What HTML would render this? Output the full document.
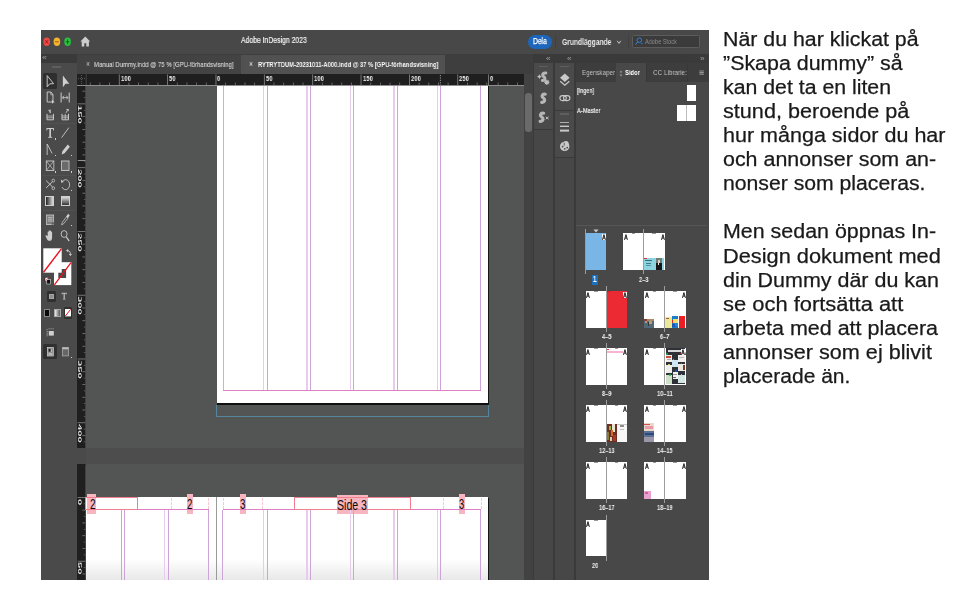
<!DOCTYPE html>
<html><head><meta charset="utf-8"><title>InDesign dummy</title>
<style>
html,body{margin:0;padding:0;background:#fff}
body{width:969px;height:604px;position:relative;overflow:hidden;font-family:"Liberation Sans", sans-serif}
body>div,body>svg{position:absolute;display:block}
.t{white-space:pre;transform-origin:0 50%;will-change:transform}
.b{font-size:20px;line-height:24px;color:#1a1a1a;-webkit-text-stroke:0.25px #1a1a1a}
</style></head><body>
<div style="left:41.00px;top:30.10px;width:667.70px;height:549.50px;background:#484848;"></div>
<div style="left:41.00px;top:30.10px;width:667.70px;height:24.20px;background:#484848;"></div>
<svg style="left:41.00px;top:34.00px;" width="40.00" height="16" viewBox="0 0 40 16"><ellipse cx="5.7" cy="7.8" rx="3.3" ry="4.2" fill="#ed4a45"/><path d="M4.4 6.2l2.6 3.2M7 6.2l-2.6 3.2" stroke="#8c1a14" stroke-width="0.9"/><ellipse cx="15.9" cy="7.8" rx="3.3" ry="4.2" fill="#f6b32e"/><path d="M14 7.8h3.8" stroke="#9a6206" stroke-width="1"/><ellipse cx="26.6" cy="7.8" rx="3.3" ry="4.2" fill="#2ac33f"/><path d="M24.7 7.8h3.8M26.6 5.4v4.8" stroke="#0b6a18" stroke-width="1"/></svg>
<svg style="left:79.50px;top:36.00px;" width="11.00" height="11" viewBox="0 0 11 11"><path d="M5.3 0.6L0.4 5.6h1.3v4.8h2.6V7.2h2v3.2h2.6V5.6h1.3z" fill="#cdcdcd"/></svg>
<div style="left:527.60px;top:35.00px;width:24.40px;height:13.60px;background:#1e66bb;border-radius:7px"></div>
<div style="left:554.60px;top:35.00px;width:0.80px;height:14.00px;background:#404040;"></div>
<svg style="left:615.80px;top:40.20px;" width="6.00" height="5" viewBox="0 0 6 5"><path d="M1.200 0.800L3 3.400L4.800 0.800" fill="none" stroke="#d0d0d0" stroke-width="0.900"/></svg>
<div style="left:628.00px;top:35.30px;width:0.80px;height:12.90px;background:#404040;"></div>
<div style="left:632.20px;top:34.70px;width:67.40px;height:13.70px;background:#3b3b3b;box-sizing:border-box;border:1px solid #5c5c5c;border-radius:1.5px"></div>
<svg style="left:634.50px;top:37.00px;" width="9.00" height="9" viewBox="0 0 9 9"><circle cx="4.3" cy="3.2" r="2.3" fill="none" stroke="#2f86e8" stroke-width="0.9"/><path d="M2.7 4.9L0.6 7.6" stroke="#2f86e8" stroke-width="1"/><path d="M5.8 6.3h2.2l-1.1 1.3z" fill="#2f86e8"/></svg>
<div style="left:41.00px;top:54.30px;width:667.70px;height:8.30px;background:#3a3a3a;"></div>
<div style="left:76.80px;top:54.30px;width:456.20px;height:19.70px;background:#3e3e3e;"></div>
<div style="left:76.80px;top:55.20px;width:163.80px;height:18.80px;background:#434343;"></div>
<div style="left:241.20px;top:55.00px;width:203.80px;height:19.00px;background:#515151;"></div>
<div style="left:41.00px;top:62.60px;width:35.60px;height:517.00px;background:#4a4a4a;"></div>
<div style="left:52.00px;top:66.00px;width:9.00px;height:1.60px;background:#5e5e5e;"></div>
<div style="left:42.60px;top:73.20px;width:14.30px;height:15.50px;background:#2f2f2f;border-radius:1.5px"></div>
<div style="left:43.00px;top:122.80px;width:32.00px;height:0.70px;background:#525252;"></div>
<div style="left:43.00px;top:175.40px;width:32.00px;height:0.70px;background:#525252;"></div>
<div style="left:43.00px;top:209.60px;width:32.00px;height:0.70px;background:#525252;"></div>
<div style="left:76.80px;top:74.00px;width:447.10px;height:11.40px;background:#1f1f1f;"></div>
<div style="left:76.80px;top:85.40px;width:8.80px;height:494.20px;background:#1f1f1f;"></div>
<div style="left:76.80px;top:84.90px;width:447.10px;height:0.80px;background:#8e8e8e;"></div>
<div style="left:85.60px;top:85.60px;width:438.30px;height:494.00px;background:#535554;"></div>
<svg style="left:76.80px;top:74.00px;" width="447.10" height="11.4" viewBox="0 0 447.1 11.4"><rect x="12.66" y="8.5" width="0.8" height="2.6" fill="#747474"/><rect x="22.34" y="8.5" width="0.8" height="2.6" fill="#747474"/><rect x="32.02" y="8.5" width="0.8" height="2.6" fill="#747474"/><rect x="41.70" y="0.4" width="0.8" height="11" fill="#8a8a8a"/><rect x="51.38" y="8.5" width="0.8" height="2.6" fill="#747474"/><rect x="61.06" y="8.5" width="0.8" height="2.6" fill="#747474"/><rect x="70.74" y="8.5" width="0.8" height="2.6" fill="#747474"/><rect x="80.42" y="8.5" width="0.8" height="2.6" fill="#747474"/><rect x="90.10" y="0.4" width="0.8" height="11" fill="#8a8a8a"/><rect x="99.78" y="8.5" width="0.8" height="2.6" fill="#747474"/><rect x="109.46" y="8.5" width="0.8" height="2.6" fill="#747474"/><rect x="119.14" y="8.5" width="0.8" height="2.6" fill="#747474"/><rect x="128.82" y="8.5" width="0.8" height="2.6" fill="#747474"/><rect x="138.50" y="0.4" width="0.8" height="11" fill="#8a8a8a"/><rect x="148.18" y="8.5" width="0.8" height="2.6" fill="#747474"/><rect x="157.86" y="8.5" width="0.8" height="2.6" fill="#747474"/><rect x="167.54" y="8.5" width="0.8" height="2.6" fill="#747474"/><rect x="177.22" y="8.5" width="0.8" height="2.6" fill="#747474"/><rect x="186.90" y="0.4" width="0.8" height="11" fill="#8a8a8a"/><rect x="196.58" y="8.5" width="0.8" height="2.6" fill="#747474"/><rect x="206.26" y="8.5" width="0.8" height="2.6" fill="#747474"/><rect x="215.94" y="8.5" width="0.8" height="2.6" fill="#747474"/><rect x="225.62" y="8.5" width="0.8" height="2.6" fill="#747474"/><rect x="235.30" y="0.4" width="0.8" height="11" fill="#8a8a8a"/><rect x="244.98" y="8.5" width="0.8" height="2.6" fill="#747474"/><rect x="254.66" y="8.5" width="0.8" height="2.6" fill="#747474"/><rect x="264.34" y="8.5" width="0.8" height="2.6" fill="#747474"/><rect x="274.02" y="8.5" width="0.8" height="2.6" fill="#747474"/><rect x="283.70" y="0.4" width="0.8" height="11" fill="#8a8a8a"/><rect x="293.38" y="8.5" width="0.8" height="2.6" fill="#747474"/><rect x="303.06" y="8.5" width="0.8" height="2.6" fill="#747474"/><rect x="312.74" y="8.5" width="0.8" height="2.6" fill="#747474"/><rect x="322.42" y="8.5" width="0.8" height="2.6" fill="#747474"/><rect x="332.10" y="0.4" width="0.8" height="11" fill="#8a8a8a"/><rect x="341.78" y="8.5" width="0.8" height="2.6" fill="#747474"/><rect x="351.46" y="8.5" width="0.8" height="2.6" fill="#747474"/><rect x="361.14" y="8.5" width="0.8" height="2.6" fill="#747474"/><rect x="370.82" y="8.5" width="0.8" height="2.6" fill="#747474"/><rect x="380.50" y="0.4" width="0.8" height="11" fill="#8a8a8a"/><rect x="390.18" y="8.5" width="0.8" height="2.6" fill="#747474"/><rect x="399.86" y="8.5" width="0.8" height="2.6" fill="#747474"/><rect x="409.54" y="8.5" width="0.8" height="2.6" fill="#747474"/><rect x="411.20" y="0.4" width="0.8" height="11" fill="#8a8a8a"/><rect x="420.88" y="8.5" width="0.8" height="2.6" fill="#747474"/><rect x="430.56" y="8.5" width="0.8" height="2.6" fill="#747474"/><rect x="440.24" y="8.5" width="0.8" height="2.6" fill="#747474"/><path d="M4.4 1v9M0.8 4.6h7.4" stroke="#777" stroke-width="0.7" stroke-dasharray="1 1"/><path d="M363.5 1v10" stroke="#bbb" stroke-width="0.8" stroke-dasharray="1.2 1.2"/><rect x="8.6" y="0" width="0.7" height="11.4" fill="#555"/></svg>
<svg style="left:76.80px;top:85.60px;" width="8.80" height="494.0" viewBox="0 0 8.8 494.0"><rect x="5.4" y="4.64" width="3.4" height="0.8" fill="#7c7c7c"/><rect x="6.8" y="11.02" width="2" height="0.8" fill="#666"/><rect x="0.6" y="17.40" width="8.2" height="0.8" fill="#8a8a8a"/><rect x="6.8" y="23.78" width="2" height="0.8" fill="#666"/><rect x="5.4" y="30.16" width="3.4" height="0.8" fill="#7c7c7c"/><rect x="6.8" y="36.54" width="2" height="0.8" fill="#666"/><rect x="5.4" y="42.92" width="3.4" height="0.8" fill="#7c7c7c"/><rect x="6.8" y="49.30" width="2" height="0.8" fill="#666"/><rect x="5.4" y="55.68" width="3.4" height="0.8" fill="#7c7c7c"/><rect x="6.8" y="62.06" width="2" height="0.8" fill="#666"/><rect x="5.4" y="68.44" width="3.4" height="0.8" fill="#7c7c7c"/><rect x="6.8" y="74.82" width="2" height="0.8" fill="#666"/><rect x="0.6" y="81.20" width="8.2" height="0.8" fill="#8a8a8a"/><rect x="6.8" y="87.58" width="2" height="0.8" fill="#666"/><rect x="5.4" y="93.96" width="3.4" height="0.8" fill="#7c7c7c"/><rect x="6.8" y="100.34" width="2" height="0.8" fill="#666"/><rect x="5.4" y="106.72" width="3.4" height="0.8" fill="#7c7c7c"/><rect x="6.8" y="113.10" width="2" height="0.8" fill="#666"/><rect x="5.4" y="119.48" width="3.4" height="0.8" fill="#7c7c7c"/><rect x="6.8" y="125.86" width="2" height="0.8" fill="#666"/><rect x="5.4" y="132.24" width="3.4" height="0.8" fill="#7c7c7c"/><rect x="6.8" y="138.62" width="2" height="0.8" fill="#666"/><rect x="0.6" y="145.00" width="8.2" height="0.8" fill="#8a8a8a"/><rect x="6.8" y="151.38" width="2" height="0.8" fill="#666"/><rect x="5.4" y="157.76" width="3.4" height="0.8" fill="#7c7c7c"/><rect x="6.8" y="164.14" width="2" height="0.8" fill="#666"/><rect x="5.4" y="170.52" width="3.4" height="0.8" fill="#7c7c7c"/><rect x="6.8" y="176.90" width="2" height="0.8" fill="#666"/><rect x="5.4" y="183.28" width="3.4" height="0.8" fill="#7c7c7c"/><rect x="6.8" y="189.66" width="2" height="0.8" fill="#666"/><rect x="5.4" y="196.04" width="3.4" height="0.8" fill="#7c7c7c"/><rect x="6.8" y="202.42" width="2" height="0.8" fill="#666"/><rect x="0.6" y="208.80" width="8.2" height="0.8" fill="#8a8a8a"/><rect x="6.8" y="215.18" width="2" height="0.8" fill="#666"/><rect x="5.4" y="221.56" width="3.4" height="0.8" fill="#7c7c7c"/><rect x="6.8" y="227.94" width="2" height="0.8" fill="#666"/><rect x="5.4" y="234.32" width="3.4" height="0.8" fill="#7c7c7c"/><rect x="6.8" y="240.70" width="2" height="0.8" fill="#666"/><rect x="5.4" y="247.08" width="3.4" height="0.8" fill="#7c7c7c"/><rect x="6.8" y="253.46" width="2" height="0.8" fill="#666"/><rect x="5.4" y="259.84" width="3.4" height="0.8" fill="#7c7c7c"/><rect x="6.8" y="266.22" width="2" height="0.8" fill="#666"/><rect x="0.6" y="272.60" width="8.2" height="0.8" fill="#8a8a8a"/><rect x="6.8" y="278.98" width="2" height="0.8" fill="#666"/><rect x="5.4" y="285.36" width="3.4" height="0.8" fill="#7c7c7c"/><rect x="6.8" y="291.74" width="2" height="0.8" fill="#666"/><rect x="5.4" y="298.12" width="3.4" height="0.8" fill="#7c7c7c"/><rect x="6.8" y="304.50" width="2" height="0.8" fill="#666"/><rect x="5.4" y="310.88" width="3.4" height="0.8" fill="#7c7c7c"/><rect x="6.8" y="317.26" width="2" height="0.8" fill="#666"/><rect x="5.4" y="323.64" width="3.4" height="0.8" fill="#7c7c7c"/><rect x="6.8" y="330.02" width="2" height="0.8" fill="#666"/><rect x="0.6" y="336.40" width="8.2" height="0.8" fill="#8a8a8a"/><rect x="6.8" y="342.78" width="2" height="0.8" fill="#666"/><rect x="5.4" y="349.16" width="3.4" height="0.8" fill="#7c7c7c"/><rect x="6.8" y="355.54" width="2" height="0.8" fill="#666"/><rect x="0.6" y="411.10" width="8.2" height="0.8" fill="#8a8a8a"/><rect x="6.8" y="417.48" width="2" height="0.8" fill="#666"/><rect x="5.4" y="423.86" width="3.4" height="0.8" fill="#7c7c7c"/><rect x="6.8" y="430.24" width="2" height="0.8" fill="#666"/><rect x="5.4" y="436.62" width="3.4" height="0.8" fill="#7c7c7c"/><rect x="6.8" y="443.00" width="2" height="0.8" fill="#666"/><rect x="5.4" y="449.38" width="3.4" height="0.8" fill="#7c7c7c"/><rect x="6.8" y="455.76" width="2" height="0.8" fill="#666"/><rect x="5.4" y="462.14" width="3.4" height="0.8" fill="#7c7c7c"/><rect x="6.8" y="468.52" width="2" height="0.8" fill="#666"/><rect x="0.6" y="474.90" width="8.2" height="0.8" fill="#8a8a8a"/><rect x="6.8" y="481.28" width="2" height="0.8" fill="#666"/><rect x="5.4" y="487.66" width="3.4" height="0.8" fill="#7c7c7c"/><rect x="8" y="0" width="0.8" height="363.3" fill="#4c4c4c"/><rect x="8" y="378.6" width="0.8" height="115.4" fill="#4c4c4c"/><rect x="0.8" y="74.1" width="7.6" height="0.8" fill="#b5b5b5"/></svg>
<div style="left:82.25px;top:104.90px;font-size:11.3px;line-height:11.3px;font-weight:700;color:#dedede;white-space:pre;transform-origin:0 0;transform:scaleX(0.433) rotate(90deg);will-change:transform">150</div>
<div style="left:82.25px;top:168.70px;font-size:11.3px;line-height:11.3px;font-weight:700;color:#dedede;white-space:pre;transform-origin:0 0;transform:scaleX(0.433) rotate(90deg);will-change:transform">200</div>
<div style="left:82.25px;top:232.50px;font-size:11.3px;line-height:11.3px;font-weight:700;color:#dedede;white-space:pre;transform-origin:0 0;transform:scaleX(0.433) rotate(90deg);will-change:transform">250</div>
<div style="left:82.25px;top:296.30px;font-size:11.3px;line-height:11.3px;font-weight:700;color:#dedede;white-space:pre;transform-origin:0 0;transform:scaleX(0.433) rotate(90deg);will-change:transform">300</div>
<div style="left:82.25px;top:360.10px;font-size:11.3px;line-height:11.3px;font-weight:700;color:#dedede;white-space:pre;transform-origin:0 0;transform:scaleX(0.433) rotate(90deg);will-change:transform">350</div>
<div style="left:82.25px;top:423.90px;font-size:11.3px;line-height:11.3px;font-weight:700;color:#dedede;white-space:pre;transform-origin:0 0;transform:scaleX(0.433) rotate(90deg);will-change:transform">400</div>
<div style="left:82.25px;top:498.60px;font-size:11.3px;line-height:11.3px;font-weight:700;color:#dedede;white-space:pre;transform-origin:0 0;transform:scaleX(0.433) rotate(90deg);will-change:transform">0</div>
<div style="left:82.25px;top:562.40px;font-size:11.3px;line-height:11.3px;font-weight:700;color:#dedede;white-space:pre;transform-origin:0 0;transform:scaleX(0.433) rotate(90deg);will-change:transform">50</div>
<div style="left:216.60px;top:85.60px;width:271.60px;height:317.20px;background:#fff;"></div>
<div style="left:216.60px;top:402.80px;width:272.60px;height:1.90px;background:#101010;"></div>
<div style="left:488.20px;top:85.60px;width:1.00px;height:319.10px;background:#151515;"></div>
<div style="left:216.3px;top:404.9px;width:272.5px;height:11.8px;box-sizing:border-box;border:0.8px solid #56869b;border-top:none"></div>
<div style="left:222.95px;top:85.60px;width:0.90px;height:304.50px;background:#e2a4d0;"></div>
<div style="left:263.35px;top:85.60px;width:1.10px;height:304.50px;background:#e9cbed;"></div>
<div style="left:266.85px;top:85.60px;width:0.90px;height:304.50px;background:#cba5da;"></div>
<div style="left:306.45px;top:85.60px;width:1.10px;height:304.50px;background:#e9cbed;"></div>
<div style="left:309.95px;top:85.60px;width:0.90px;height:304.50px;background:#cba5da;"></div>
<div style="left:350.05px;top:85.60px;width:1.10px;height:304.50px;background:#e9cbed;"></div>
<div style="left:353.35px;top:85.60px;width:0.90px;height:304.50px;background:#cba5da;"></div>
<div style="left:393.45px;top:85.60px;width:1.10px;height:304.50px;background:#e9cbed;"></div>
<div style="left:396.85px;top:85.60px;width:0.90px;height:304.50px;background:#cba5da;"></div>
<div style="left:436.85px;top:85.60px;width:1.10px;height:304.50px;background:#e9cbed;"></div>
<div style="left:440.35px;top:85.60px;width:0.90px;height:304.50px;background:#cba5da;"></div>
<div style="left:479.95px;top:85.60px;width:0.90px;height:304.50px;background:#cba5da;"></div>
<div style="left:223.00px;top:389.60px;width:257.80px;height:1.00px;background:#dd7fc0;"></div>
<div style="left:76.80px;top:448.30px;width:447.10px;height:16.00px;background:#4d4d4d;"></div>
<div style="left:76.80px;top:448.30px;width:8.80px;height:16.00px;background:#4a4a4a;"></div>
<div style="left:85.60px;top:496.80px;width:402.60px;height:82.80px;background:#fff;"></div>
<div style="left:85.6px;top:558.6px;width:402.7px;height:21px;background:linear-gradient(#fff,#e8e8e8)"></div>
<div style="left:488.20px;top:497.60px;width:1.00px;height:82.00px;background:#151515;"></div>
<div style="left:86.90px;top:494.40px;width:8.70px;height:19.40px;background:#f6b5bf;"></div>
<div style="left:186.80px;top:494.40px;width:6.50px;height:19.40px;background:#f6b5bf;"></div>
<div style="left:239.70px;top:494.40px;width:6.50px;height:19.40px;background:#f6b5bf;"></div>
<div style="left:337.00px;top:494.80px;width:30.60px;height:18.80px;background:#f6b5bf;"></div>
<div style="left:459.00px;top:494.40px;width:5.50px;height:19.40px;background:#f6b5bf;"></div>
<div style="left:215.85px;top:497.10px;width:0.90px;height:82.50px;background:#9a9a9a;"></div>
<div style="left:121.25px;top:509.50px;width:0.90px;height:70.10px;background:#cba5da;"></div>
<div style="left:124.45px;top:509.50px;width:0.90px;height:70.10px;background:#cba5da;"></div>
<div style="left:164.25px;top:509.50px;width:1.10px;height:70.10px;background:#e9cbed;"></div>
<div style="left:167.75px;top:509.50px;width:0.90px;height:70.10px;background:#cba5da;"></div>
<div style="left:208.25px;top:509.50px;width:0.90px;height:70.10px;background:#cba5da;"></div>
<div style="left:85.60px;top:509.00px;width:123.30px;height:1.00px;background:#dd7fc0;"></div>
<div style="left:222.45px;top:509.50px;width:0.90px;height:70.10px;background:#cba5da;"></div>
<div style="left:263.35px;top:509.50px;width:1.10px;height:70.10px;background:#e9cbed;"></div>
<div style="left:266.85px;top:509.50px;width:0.90px;height:70.10px;background:#cba5da;"></div>
<div style="left:306.45px;top:509.50px;width:1.10px;height:70.10px;background:#e9cbed;"></div>
<div style="left:309.95px;top:509.50px;width:0.90px;height:70.10px;background:#cba5da;"></div>
<div style="left:350.05px;top:509.50px;width:1.10px;height:70.10px;background:#e9cbed;"></div>
<div style="left:353.35px;top:509.50px;width:0.90px;height:70.10px;background:#cba5da;"></div>
<div style="left:393.45px;top:509.50px;width:1.10px;height:70.10px;background:#e9cbed;"></div>
<div style="left:396.85px;top:509.50px;width:0.90px;height:70.10px;background:#cba5da;"></div>
<div style="left:436.85px;top:509.50px;width:1.10px;height:70.10px;background:#e9cbed;"></div>
<div style="left:440.35px;top:509.50px;width:0.90px;height:70.10px;background:#cba5da;"></div>
<div style="left:480.25px;top:509.50px;width:0.90px;height:70.10px;background:#cba5da;"></div>
<div style="left:222.60px;top:509.00px;width:258.40px;height:1.00px;background:#dd7fc0;"></div>
<div style="left:171.00px;top:497.50px;width:0;height:11.80px;border-left:0.8px dashed #f8c9d3"></div>
<div style="left:207.90px;top:497.50px;width:0;height:11.80px;border-left:0.8px dashed #f8c9d3"></div>
<div style="left:223.20px;top:497.50px;width:0;height:11.80px;border-left:0.8px dashed #f8c9d3"></div>
<div style="left:262.00px;top:497.50px;width:0;height:11.80px;border-left:0.8px dashed #f8c9d3"></div>
<div style="left:443.30px;top:497.50px;width:0;height:11.80px;border-left:0.8px dashed #f8c9d3"></div>
<div style="left:480.50px;top:497.50px;width:0;height:11.80px;border-left:0.8px dashed #f8c9d3"></div>
<div style="left:85.20px;top:497.30px;width:52.80px;height:12.90px;box-sizing:border-box;border:1px solid #f27f90"></div>
<div style="left:294.30px;top:497.40px;width:116.40px;height:12.90px;box-sizing:border-box;border:1px solid #f27f90"></div>
<div style="left:523.90px;top:74.00px;width:9.30px;height:505.60px;background:#424242;"></div>
<div style="left:525.30px;top:92.90px;width:6.30px;height:38.90px;background:#6a6a6a;border-radius:3.2px"></div>
<div style="left:533.20px;top:62.60px;width:175.50px;height:517.00px;background:#3a3a3a;"></div>
<div style="left:533.70px;top:62.60px;width:19.20px;height:66.40px;background:#4a4a4a;"></div>
<div style="left:533.70px;top:129.80px;width:19.20px;height:449.80px;background:#474747;"></div>
<div style="left:554.80px;top:62.60px;width:18.80px;height:47.40px;background:#4a4a4a;"></div>
<div style="left:554.80px;top:110.80px;width:18.80px;height:46.20px;background:#4a4a4a;"></div>
<div style="left:554.80px;top:157.80px;width:18.80px;height:421.80px;background:#474747;"></div>
<div style="left:575.60px;top:62.60px;width:133.10px;height:517.00px;background:#484848;"></div>
<div style="left:539.00px;top:65.80px;width:8.60px;height:1.40px;background:#5e5e5e;"></div>
<div style="left:560.00px;top:65.80px;width:8.60px;height:1.40px;background:#5e5e5e;"></div>
<div style="left:560.00px;top:113.40px;width:8.60px;height:1.40px;background:#5e5e5e;"></div>
<div style="left:575.60px;top:62.60px;width:133.10px;height:19.30px;background:#3d3d3d;"></div>
<div style="left:616.10px;top:62.60px;width:29.80px;height:19.30px;background:#484848;"></div>
<div style="left:645.90px;top:62.60px;width:0.70px;height:19.30px;background:#383838;"></div>
<div style="left:686.60px;top:62.60px;width:0.60px;height:19.30px;background:#383838;"></div>
<svg style="left:618.80px;top:69.60px;" width="4.00" height="7" viewBox="0 0 4 7"><path d="M2 0.6L3.4 2.6H0.6zM2 6.4L3.4 4.4H0.6z" fill="#9a9a9a"/></svg>
<svg style="left:699.00px;top:70.00px;" width="6.00" height="6" viewBox="0 0 6 6"><path d="M0.4 1h4.4M0.4 2.6h4.4M0.4 4.200h4.400" stroke="#929292" stroke-width="1.1"/></svg>
<div style="left:686.60px;top:84.50px;width:9.60px;height:16.20px;background:#fff;"></div>
<div style="left:677.00px;top:105.00px;width:19.20px;height:15.60px;background:#fff;"></div>
<div style="left:686.30px;top:105.00px;width:0.60px;height:15.60px;background:#bdbdbd;"></div>
<div style="left:576.00px;top:225.10px;width:130.50px;height:0.80px;background:#555;"></div>
<svg style="left:536.80px;top:71.40px;" width="14.00" height="15" viewBox="0 0 14 15"><path d="M2.400 3.300l0.900 1.500 1.500 0.900-1.500 0.900-0.900 1.500-0.900-1.500-1.500-0.900 1.500-0.900z" fill="#bdbdbd"/><path d="M8.800 2C5.600 1.400 4.800 4.400 6.800 5.800 8.600 7.100 8 9.600 5.400 9.400" fill="none" stroke="#b6b6b6" stroke-width="3" stroke-linecap="round"/><circle cx="9.800" cy="11.300" r="1.600" fill="none" stroke="#c4c4c4" stroke-width="1.100"/><path d="M9.800 8.600v5.400M7.100 11.300h5.400M7.900 9.400l3.800 3.800M11.700 9.400l-3.800 3.800" stroke="#c4c4c4" stroke-width="0.800"/></svg>
<svg style="left:538.40px;top:92.00px;" width="12.00" height="13" viewBox="0 0 12 13"><path d="M7.200 2.200C4.200 1.400 3.200 4.600 5.400 6 7.400 7.300 6.800 10.700 3.800 10.300" fill="none" stroke="#b6b6b6" stroke-width="3.200" stroke-linecap="round"/></svg>
<svg style="left:537.00px;top:111.40px;" width="14.00" height="13" viewBox="0 0 14 13"><path d="M6.600 2.200C3.600 1.400 2.600 4.600 4.800 6 6.800 7.300 6.200 10.700 3.200 10.300" fill="none" stroke="#b6b6b6" stroke-width="3.200" stroke-linecap="round"/><path d="M8.800 5.800l2.800 2.400M11.600 5.800l-2.800 2.400" stroke="#c4c4c4" stroke-width="1"/></svg>
<svg style="left:558.50px;top:72.50px;" width="12.00" height="14" viewBox="0 0 12 14"><path d="M5.800 0.600L10.600 4.800 5.800 9 1 4.800z" fill="#c9c9c9"/><path d="M1.200 8.200L5.800 12.200 10.400 8.200" fill="none" stroke="#c9c9c9" stroke-width="1.200"/></svg>
<svg style="left:558.50px;top:94.00px;" width="12.00" height="9" viewBox="0 0 12 9"><rect x="0.900" y="1.600" width="6.400" height="5" rx="2.500" fill="none" stroke="#c9c9c9" stroke-width="1.100"/><rect x="4.500" y="1.600" width="6.400" height="5" rx="2.500" fill="none" stroke="#c9c9c9" stroke-width="1.100"/></svg>
<svg style="left:559.00px;top:120.50px;" width="11.00" height="12" viewBox="0 0 11 12"><rect x="1" y="1" width="9" height="0.800" fill="#c9c9c9"/><rect x="1" y="4.600" width="9" height="1.400" fill="#c9c9c9"/><rect x="1" y="8.600" width="9" height="2" fill="#c9c9c9"/></svg>
<svg style="left:559.00px;top:140.00px;" width="12.00" height="12" viewBox="0 0 12 12"><circle cx="5.700" cy="6.400" r="4.700" fill="#c9c9c9"/><circle cx="7" cy="3.800" r="2.700" fill="#c9c9c9"/><circle cx="3.600" cy="6.600" r="0.900" fill="#4a4a4a"/><circle cx="5.800" cy="8.800" r="0.900" fill="#4a4a4a"/><circle cx="8.200" cy="7.600" r="0.900" fill="#4a4a4a"/><path d="M5.200 2.600v3.200" stroke="#4a4a4a" stroke-width="0.800"/></svg>
<div style="left:585.70px;top:233.20px;width:20.70px;height:36.80px;background:#79b6e6;"></div>
<div style="left:585.30px;top:228.60px;width:0.80px;height:45.80px;background:#9c9c9c;"></div>
<svg style="left:592.60px;top:229.20px;" width="6.00" height="4" viewBox="0 0 6 4"><path d="M0.400 0.400h5.200L3 3.400z" fill="#c8c8c8"/></svg>
<div style="left:601.90px;top:233.80px;width:4.40px;height:6.40px;background:#fff;"></div>
<svg style="left:602.20px;top:234.20px;" width="4.00" height="6.4" viewBox="0 0 4 6.4"><path d="M0.450 5.900L1.950 0.600L3.450 5.900M1 4.100h1.900" fill="none" stroke="#0a0a0a" stroke-width="0.850"/></svg>
<div style="left:592.10px;top:274.50px;width:5.90px;height:10.10px;background:#1d70bb;"></div>
<div style="left:623.10px;top:233.20px;width:41.90px;height:36.80px;background:#fff;"></div>
<div style="left:643.40px;top:228.60px;width:0.80px;height:45.80px;background:#9c9c9c;"></div>
<svg style="left:623.60px;top:234.20px;" width="4.00" height="6.4" viewBox="0 0 4 6.4"><path d="M0.450 5.900L1.950 0.600L3.450 5.900M1 4.100h1.900" fill="none" stroke="#0a0a0a" stroke-width="0.850"/></svg>
<svg style="left:660.80px;top:234.20px;" width="4.00" height="6.4" viewBox="0 0 4 6.4"><path d="M0.450 5.900L1.950 0.600L3.450 5.900M1 4.100h1.900" fill="none" stroke="#0a0a0a" stroke-width="0.850"/></svg>
<div style="left:631.60px;top:233.20px;width:3.50px;height:0.50px;background:#999;"></div>
<div style="left:652.30px;top:233.20px;width:3.50px;height:0.50px;background:#999;"></div>
<div style="left:644.10px;top:257.90px;width:19.90px;height:11.90px;background:#8dd3e0;"></div>
<div style="left:656.00px;top:258.20px;width:5.80px;height:11.60px;background:#6f7f78;"></div>
<div style="left:656.20px;top:263.40px;width:5.40px;height:6.40px;background:#17171a;"></div>
<div style="left:657.90px;top:259.60px;width:2.00px;height:3.60px;background:#d9c9c2;"></div>
<div style="left:658.40px;top:263.00px;width:1.00px;height:2.00px;background:#e8e8e8;"></div>
<div style="left:644.10px;top:257.90px;width:2.70px;height:1.10px;background:#c83848;"></div>
<div style="left:645.30px;top:260.00px;width:6.70px;height:0.90px;background:#2f6f7c;"></div>
<div style="left:646.20px;top:263.20px;width:4.80px;height:0.80px;background:#3a7f8c;"></div>
<div style="left:646.20px;top:264.80px;width:4.80px;height:0.60px;background:#4f93a0;"></div>
<div style="left:585.70px;top:290.90px;width:41.40px;height:36.80px;background:#fff;"></div>
<div style="left:606.00px;top:286.30px;width:0.80px;height:45.80px;background:#9c9c9c;"></div>
<svg style="left:586.20px;top:291.90px;" width="4.00" height="6.4" viewBox="0 0 4 6.4"><path d="M0.450 5.900L1.950 0.600L3.450 5.900M1 4.100h1.900" fill="none" stroke="#0a0a0a" stroke-width="0.850"/></svg>
<svg style="left:622.90px;top:291.90px;" width="4.00" height="6.4" viewBox="0 0 4 6.4"><path d="M0.450 5.900L1.950 0.600L3.450 5.900M1 4.100h1.900" fill="none" stroke="#0a0a0a" stroke-width="0.850"/></svg>
<div style="left:594.20px;top:290.90px;width:3.50px;height:0.50px;background:#999;"></div>
<div style="left:614.90px;top:290.90px;width:3.50px;height:0.50px;background:#999;"></div>
<div style="left:606.80px;top:290.90px;width:20.30px;height:36.80px;background:#ec2a33;"></div>
<div style="left:622.60px;top:291.50px;width:4.40px;height:6.40px;background:#fff;"></div>
<svg style="left:622.90px;top:291.90px;" width="4.00" height="6.4" viewBox="0 0 4 6.4"><path d="M0.450 5.900L1.950 0.600L3.450 5.900M1 4.100h1.900" fill="none" stroke="#0a0a0a" stroke-width="0.850"/></svg>
<div style="left:606.80px;top:290.90px;width:3.70px;height:1.40px;background:#c4222a;"></div>
<div style="left:644.10px;top:290.90px;width:41.90px;height:36.80px;background:#fff;"></div>
<div style="left:664.40px;top:286.30px;width:0.80px;height:45.80px;background:#9c9c9c;"></div>
<svg style="left:644.60px;top:291.90px;" width="4.00" height="6.4" viewBox="0 0 4 6.4"><path d="M0.450 5.900L1.950 0.600L3.450 5.900M1 4.100h1.900" fill="none" stroke="#0a0a0a" stroke-width="0.850"/></svg>
<svg style="left:681.80px;top:291.90px;" width="4.00" height="6.4" viewBox="0 0 4 6.4"><path d="M0.450 5.900L1.950 0.600L3.450 5.900M1 4.100h1.900" fill="none" stroke="#0a0a0a" stroke-width="0.850"/></svg>
<div style="left:652.60px;top:290.90px;width:3.50px;height:0.50px;background:#999;"></div>
<div style="left:673.30px;top:290.90px;width:3.50px;height:0.50px;background:#999;"></div>
<div style="left:644.00px;top:319.20px;width:10.40px;height:8.50px;background:#526878;"></div>
<div style="left:644.00px;top:319.20px;width:10.40px;height:2.00px;background:#a98a66;"></div>
<div style="left:644.00px;top:319.20px;width:3.00px;height:1.40px;background:#8a3c32;"></div>
<div style="left:645.40px;top:321.20px;width:2.00px;height:2.20px;background:#b39478;"></div>
<div style="left:649.40px;top:320.80px;width:3.00px;height:2.80px;background:#b89a7c;"></div>
<div style="left:647.60px;top:322.40px;width:0.80px;height:3.60px;background:#2e3a30;"></div>
<div style="left:665.00px;top:317.00px;width:6.70px;height:10.70px;background:#ecea98;"></div>
<div style="left:665.50px;top:317.60px;width:3.10px;height:1.00px;background:#b0583a;"></div>
<div style="left:671.70px;top:316.20px;width:6.70px;height:11.50px;background:#1c7ccc;"></div>
<div style="left:672.60px;top:318.60px;width:5.00px;height:4.80px;background:#f0e262;"></div>
<div style="left:672.00px;top:319.80px;width:1.20px;height:2.80px;background:#e02626;"></div>
<div style="left:674.60px;top:322.60px;width:3.40px;height:3.80px;background:#1f8ad8;"></div>
<div style="left:672.40px;top:324.40px;width:2.60px;height:2.40px;background:#1a56b8;"></div>
<div style="left:678.80px;top:316.10px;width:6.20px;height:11.60px;background:#ee1c24;"></div>
<div style="left:585.70px;top:348.00px;width:41.40px;height:36.80px;background:#fff;"></div>
<div style="left:606.00px;top:343.40px;width:0.80px;height:45.80px;background:#9c9c9c;"></div>
<svg style="left:586.20px;top:349.00px;" width="4.00" height="6.4" viewBox="0 0 4 6.4"><path d="M0.450 5.900L1.950 0.600L3.450 5.900M1 4.100h1.900" fill="none" stroke="#0a0a0a" stroke-width="0.850"/></svg>
<svg style="left:622.90px;top:349.00px;" width="4.00" height="6.4" viewBox="0 0 4 6.4"><path d="M0.450 5.900L1.950 0.600L3.450 5.900M1 4.100h1.900" fill="none" stroke="#0a0a0a" stroke-width="0.850"/></svg>
<div style="left:594.20px;top:348.00px;width:3.50px;height:0.50px;background:#999;"></div>
<div style="left:614.90px;top:348.00px;width:3.50px;height:0.50px;background:#999;"></div>
<div style="left:607.20px;top:350.80px;width:16.00px;height:2.10px;background:#f7b4cf;"></div>
<div style="left:607.00px;top:348.60px;width:1.60px;height:1.00px;background:#e33;"></div>
<div style="left:644.10px;top:348.00px;width:41.90px;height:36.80px;background:#fff;"></div>
<div style="left:664.40px;top:343.40px;width:0.80px;height:45.80px;background:#9c9c9c;"></div>
<svg style="left:644.60px;top:349.00px;" width="4.00" height="6.4" viewBox="0 0 4 6.4"><path d="M0.450 5.900L1.950 0.600L3.450 5.900M1 4.100h1.900" fill="none" stroke="#0a0a0a" stroke-width="0.850"/></svg>
<svg style="left:681.80px;top:349.00px;" width="4.00" height="6.4" viewBox="0 0 4 6.4"><path d="M0.450 5.900L1.950 0.600L3.450 5.900M1 4.100h1.900" fill="none" stroke="#0a0a0a" stroke-width="0.850"/></svg>
<div style="left:652.60px;top:348.00px;width:3.50px;height:0.50px;background:#999;"></div>
<div style="left:673.30px;top:348.00px;width:3.50px;height:0.50px;background:#999;"></div>
<div style="left:665.60px;top:348.30px;width:19.70px;height:36.20px;background:#2e3238;"></div>
<div style="left:665.80px;top:355.00px;width:6.20px;height:7.00px;background:#f1efec;"></div>
<div style="left:665.80px;top:364.50px;width:6.20px;height:8.00px;background:#efeeea;"></div>
<div style="left:665.80px;top:375.00px;width:6.20px;height:9.00px;background:#cfe0c8;"></div>
<div style="left:672.40px;top:360.00px;width:5.60px;height:7.00px;background:#cfe4f4;"></div>
<div style="left:672.60px;top:371.50px;width:5.20px;height:7.50px;background:#f0f0ee;"></div>
<div style="left:678.40px;top:354.50px;width:6.40px;height:7.00px;background:#f0efec;"></div>
<div style="left:678.40px;top:364.00px;width:6.40px;height:7.00px;background:#ece8e2;"></div>
<div style="left:678.40px;top:374.50px;width:6.40px;height:8.50px;background:#d4e6e4;"></div>
<div style="left:683.00px;top:364.60px;width:2.00px;height:5.80px;background:#7a3a28;"></div>
<div style="left:666.40px;top:356.40px;width:4.20px;height:1.20px;background:#c8503c;"></div>
<div style="left:666.60px;top:359.00px;width:4.40px;height:0.60px;background:#aaa;"></div>
<div style="left:679.00px;top:357.00px;width:5.00px;height:0.60px;background:#bbb;"></div>
<div style="left:673.20px;top:373.50px;width:3.80px;height:0.70px;background:#999;"></div>
<div style="left:673.20px;top:377.20px;width:3.30px;height:0.60px;background:#666;"></div>
<div style="left:667.50px;top:350.40px;width:14.00px;height:1.80px;background:#d8d8d8;"></div>
<div style="left:666.20px;top:353.20px;width:1.60px;height:1.60px;background:#22b04a;border-radius:1px"></div>
<div style="left:680.20px;top:352.80px;width:1.60px;height:1.60px;background:#e0262c;border-radius:1px"></div>
<div style="left:672.60px;top:358.80px;width:1.60px;height:1.60px;background:#f29ac4;border-radius:1px"></div>
<div style="left:668.40px;top:363.80px;width:1.60px;height:1.60px;background:#f2dc2e;border-radius:1px"></div>
<div style="left:680.80px;top:362.80px;width:1.60px;height:1.60px;background:#f0562a;border-radius:1px"></div>
<div style="left:675.00px;top:370.00px;width:1.60px;height:1.60px;background:#2a5ad0;border-radius:1px"></div>
<div style="left:669.40px;top:374.20px;width:1.60px;height:1.60px;background:#22b04a;border-radius:1px"></div>
<div style="left:680.60px;top:373.80px;width:1.60px;height:1.60px;background:#f2dc2e;border-radius:1px"></div>
<div style="left:681.00px;top:348.60px;width:4.40px;height:6.40px;background:#fff;"></div>
<svg style="left:681.30px;top:349.00px;" width="4.00" height="6.4" viewBox="0 0 4 6.4"><path d="M0.450 5.900L1.950 0.600L3.450 5.900M1 4.100h1.900" fill="none" stroke="#0a0a0a" stroke-width="0.850"/></svg>
<div style="left:585.70px;top:404.80px;width:41.40px;height:36.80px;background:#fff;"></div>
<div style="left:606.00px;top:400.20px;width:0.80px;height:45.80px;background:#9c9c9c;"></div>
<svg style="left:586.20px;top:405.80px;" width="4.00" height="6.4" viewBox="0 0 4 6.4"><path d="M0.450 5.900L1.950 0.600L3.450 5.900M1 4.100h1.900" fill="none" stroke="#0a0a0a" stroke-width="0.850"/></svg>
<svg style="left:622.90px;top:405.80px;" width="4.00" height="6.4" viewBox="0 0 4 6.4"><path d="M0.450 5.900L1.950 0.600L3.450 5.900M1 4.100h1.900" fill="none" stroke="#0a0a0a" stroke-width="0.850"/></svg>
<div style="left:594.20px;top:404.80px;width:3.50px;height:0.50px;background:#999;"></div>
<div style="left:614.90px;top:404.80px;width:3.50px;height:0.50px;background:#999;"></div>
<div style="left:606.60px;top:423.70px;width:10.10px;height:17.90px;background:#6e2f22;"></div>
<div style="left:608.60px;top:426.40px;width:2.00px;height:3.80px;background:#9ab83a;"></div>
<div style="left:612.00px;top:424.00px;width:3.40px;height:8.00px;background:#e9e2d4;"></div>
<div style="left:610.80px;top:430.00px;width:2.60px;height:6.00px;background:#d06a2a;"></div>
<div style="left:607.00px;top:432.00px;width:2.40px;height:8.00px;background:#8a7a3a;"></div>
<div style="left:613.00px;top:435.00px;width:3.00px;height:6.00px;background:#a8382a;"></div>
<div style="left:609.60px;top:436.50px;width:2.40px;height:4.50px;background:#ddd0b0;"></div>
<div style="left:616.70px;top:423.70px;width:10.20px;height:17.90px;background:#f7f7f7;"></div>
<div style="left:616.70px;top:423.50px;width:10.20px;height:0.60px;background:#c9c9c9;"></div>
<div style="left:619.50px;top:425.40px;width:4.30px;height:1.40px;background:#8e8e8e;"></div>
<div style="left:620.00px;top:428.80px;width:3.50px;height:0.60px;background:#c0c0c0;"></div>
<div style="left:644.10px;top:404.80px;width:41.90px;height:36.80px;background:#fff;"></div>
<div style="left:664.40px;top:400.20px;width:0.80px;height:45.80px;background:#9c9c9c;"></div>
<svg style="left:644.60px;top:405.80px;" width="4.00" height="6.4" viewBox="0 0 4 6.4"><path d="M0.450 5.900L1.950 0.600L3.450 5.900M1 4.100h1.900" fill="none" stroke="#0a0a0a" stroke-width="0.850"/></svg>
<svg style="left:681.80px;top:405.80px;" width="4.00" height="6.4" viewBox="0 0 4 6.4"><path d="M0.450 5.900L1.950 0.600L3.450 5.900M1 4.100h1.900" fill="none" stroke="#0a0a0a" stroke-width="0.850"/></svg>
<div style="left:652.60px;top:404.80px;width:3.50px;height:0.50px;background:#999;"></div>
<div style="left:673.30px;top:404.80px;width:3.50px;height:0.50px;background:#999;"></div>
<div style="left:644.10px;top:423.40px;width:10.10px;height:18.20px;background:#9a98a8;"></div>
<div style="left:644.10px;top:423.40px;width:10.10px;height:7.20px;background:#e8d9c8;"></div>
<div style="left:644.40px;top:424.00px;width:5.60px;height:1.20px;background:#d84a5a;"></div>
<div style="left:645.00px;top:426.00px;width:8.00px;height:2.80px;background:#e89aa8;"></div>
<div style="left:644.10px;top:430.60px;width:10.10px;height:6.00px;background:#5c7092;"></div>
<div style="left:644.60px;top:433.00px;width:9.00px;height:2.00px;background:#2c4884;"></div>
<div style="left:585.70px;top:462.00px;width:41.40px;height:36.80px;background:#fff;"></div>
<div style="left:606.00px;top:457.40px;width:0.80px;height:45.80px;background:#9c9c9c;"></div>
<svg style="left:586.20px;top:463.00px;" width="4.00" height="6.4" viewBox="0 0 4 6.4"><path d="M0.450 5.900L1.950 0.600L3.450 5.900M1 4.100h1.900" fill="none" stroke="#0a0a0a" stroke-width="0.850"/></svg>
<svg style="left:622.90px;top:463.00px;" width="4.00" height="6.4" viewBox="0 0 4 6.4"><path d="M0.450 5.900L1.950 0.600L3.450 5.900M1 4.100h1.900" fill="none" stroke="#0a0a0a" stroke-width="0.850"/></svg>
<div style="left:594.20px;top:462.00px;width:3.50px;height:0.50px;background:#999;"></div>
<div style="left:614.90px;top:462.00px;width:3.50px;height:0.50px;background:#999;"></div>
<div style="left:644.10px;top:462.00px;width:41.90px;height:36.80px;background:#fff;"></div>
<div style="left:664.40px;top:457.40px;width:0.80px;height:45.80px;background:#9c9c9c;"></div>
<svg style="left:644.60px;top:463.00px;" width="4.00" height="6.4" viewBox="0 0 4 6.4"><path d="M0.450 5.900L1.950 0.600L3.450 5.900M1 4.100h1.900" fill="none" stroke="#0a0a0a" stroke-width="0.850"/></svg>
<svg style="left:681.80px;top:463.00px;" width="4.00" height="6.4" viewBox="0 0 4 6.4"><path d="M0.450 5.900L1.950 0.600L3.450 5.900M1 4.100h1.900" fill="none" stroke="#0a0a0a" stroke-width="0.850"/></svg>
<div style="left:652.60px;top:462.00px;width:3.50px;height:0.50px;background:#999;"></div>
<div style="left:673.30px;top:462.00px;width:3.50px;height:0.50px;background:#999;"></div>
<div style="left:644.40px;top:491.20px;width:6.50px;height:7.40px;background:#e9a2cf;"></div>
<div style="left:645.00px;top:492.00px;width:3.00px;height:2.00px;background:#d85aa0;"></div>
<div style="left:585.70px;top:519.60px;width:20.50px;height:36.80px;background:#fff;"></div>
<div style="left:606.00px;top:515.00px;width:0.80px;height:45.80px;background:#9c9c9c;"></div>
<svg style="left:586.20px;top:520.60px;" width="4.00" height="6.4" viewBox="0 0 4 6.4"><path d="M0.450 5.900L1.950 0.600L3.450 5.900M1 4.100h1.900" fill="none" stroke="#0a0a0a" stroke-width="0.850"/></svg>
<div style="left:594.20px;top:519.60px;width:3.50px;height:0.50px;background:#999;"></div>
<svg style="left:43.64px;top:73.70px;" width="12.32" height="15" viewBox="0 0 14 15" preserveAspectRatio="none"><path d="M3.600 1.600v11.200l2.900-3 4.400-.1z" fill="none" stroke="#cfcfcf" stroke-width="1"/></svg>
<svg style="left:59.24px;top:73.70px;" width="12.32" height="15" viewBox="0 0 14 15" preserveAspectRatio="none"><path d="M4.400 1.400v11.800l3.100-3.400 4.200-.1z" fill="#cfcfcf"/></svg>
<svg style="left:43.64px;top:89.90px;" width="12.32" height="15" viewBox="0 0 14 15" preserveAspectRatio="none"><path d="M3.600 2h4.200l2.400 2.600v7.400h-6.600z" fill="none" stroke="#cfcfcf" stroke-width="1"/><path d="M7.800 2v2.800h2.400" fill="none" stroke="#cfcfcf" stroke-width="0.800"/><path d="M8.800 9.400l3.400 3-1.800.2-1.200 1.400z" fill="#cfcfcf"/></svg>
<svg style="left:59.24px;top:89.90px;" width="12.32" height="15" viewBox="0 0 14 15" preserveAspectRatio="none"><path d="M2.400 2.600v10M11.600 2.600v10" stroke="#cfcfcf" stroke-width="1.100"/><path d="M4 7.600h6" stroke="#cfcfcf" stroke-width="0.900"/><path d="M5.600 5.800L3.800 7.600l1.800 1.800M8.400 5.800l1.800 1.800-1.800 1.800" fill="none" stroke="#cfcfcf" stroke-width="0.900"/></svg>
<svg style="left:43.64px;top:106.70px;" width="12.32" height="15" viewBox="0 0 14 15" preserveAspectRatio="none"><path d="M3.400 6.800v6h7.400v-6" fill="none" stroke="#cfcfcf" stroke-width="1"/><path d="M3.400 9h7.400M3.400 10.800h7.400" stroke="#cfcfcf" stroke-width="0.800"/><path d="M4 2.200l2.400 1.400v-1h1.200v3.600h-1.200v-1.200z" fill="#cfcfcf"/></svg>
<svg style="left:59.24px;top:106.70px;" width="12.32" height="15" viewBox="0 0 14 15" preserveAspectRatio="none"><path d="M3.400 6.800v6h7.400v-6" fill="none" stroke="#cfcfcf" stroke-width="1"/><path d="M3.400 9h7.400M3.400 10.800h7.400M7.100 6.800v6" stroke="#cfcfcf" stroke-width="0.800"/><path d="M8 5.800l2.400-3.600M10.400 2.200l-2 .4M10.400 2.200l.2 2" stroke="#cfcfcf" stroke-width="0.900" fill="none"/></svg>
<svg style="left:43.64px;top:124.90px;" width="12.32" height="15" viewBox="0 0 14 15" preserveAspectRatio="none"><path d="M2.800 3h8.400v2.400h-.8l-.3-1.400h-2.200v7.800l1.400.3v.7h-4.600v-.7l1.400-.3v-7.800h-2.200l-.3 1.400h-.8z" fill="#cfcfcf"/></svg>
<div style="left:55.00px;top:138.40px;width:1.00px;height:1.20px;background:#cfcfcf;"></div>
<svg style="left:59.24px;top:124.90px;" width="12.32" height="15" viewBox="0 0 14 15" preserveAspectRatio="none"><path d="M3 12.600L11.200 2.600" stroke="#cfcfcf" stroke-width="0.900"/></svg>
<svg style="left:43.64px;top:141.50px;" width="12.32" height="15" viewBox="0 0 14 15" preserveAspectRatio="none"><path d="M3.600 13v-11l5.600 9.400" fill="none" stroke="#cfcfcf" stroke-width="0.900"/></svg>
<div style="left:54.60px;top:154.80px;width:1.20px;height:1.20px;background:#cfcfcf;"></div>
<svg style="left:59.24px;top:141.50px;" width="12.32" height="15" viewBox="0 0 14 15" preserveAspectRatio="none"><path d="M3 12.400l1-3.400 6-6.400 2.400 2.200-6 6.400z" fill="#cfcfcf"/></svg>
<div style="left:70.60px;top:154.80px;width:1.20px;height:1.20px;background:#cfcfcf;"></div>
<svg style="left:43.64px;top:158.10px;" width="12.32" height="15" viewBox="0 0 14 15" preserveAspectRatio="none"><rect x="2.600" y="3" width="8.600" height="9.400" fill="none" stroke="#cfcfcf" stroke-width="0.900"/><path d="M2.600 3l8.600 9.400M11.200 3l-8.600 9.400" stroke="#cfcfcf" stroke-width="0.700"/></svg>
<div style="left:54.60px;top:171.40px;width:1.20px;height:1.20px;background:#cfcfcf;"></div>
<svg style="left:59.24px;top:158.10px;" width="12.32" height="15" viewBox="0 0 14 15" preserveAspectRatio="none"><rect x="2.800" y="3" width="8.600" height="9.400" fill="#6a6a6a" stroke="#cfcfcf" stroke-width="0.900"/></svg>
<div style="left:70.60px;top:171.40px;width:1.20px;height:1.20px;background:#cfcfcf;"></div>
<svg style="left:43.64px;top:176.70px;" width="12.32" height="15" viewBox="0 0 14 15" preserveAspectRatio="none"><path d="M2.400 3.600l7.400 6.400M2.400 11l7.400-6.400" stroke="#cfcfcf" stroke-width="1"/><circle cx="10.600" cy="3.600" r="1.500" fill="none" stroke="#cfcfcf" stroke-width="0.800"/><circle cx="10.600" cy="11.200" r="1.500" fill="none" stroke="#cfcfcf" stroke-width="0.800"/></svg>
<svg style="left:59.24px;top:176.70px;" width="12.32" height="15" viewBox="0 0 14 15" preserveAspectRatio="none"><path d="M4 4.400a4.600 5 0 1 1 -.6 5.600" fill="none" stroke="#cfcfcf" stroke-width="0.900"/><path d="M2.200 2.400l.4 3.400 3-.8z" fill="#cfcfcf"/></svg>
<div style="left:70.60px;top:189.80px;width:1.20px;height:1.20px;background:#cfcfcf;"></div>
<div style="left:45.3px;top:196.2px;width:8.600px;height:9.400px;box-sizing:border-box;border:0.800px solid #cfcfcf;background:linear-gradient(90deg,#222,#ddd)"></div>
<div style="left:61.200px;top:196.200px;width:8.600px;height:9.400px;box-sizing:border-box;border:0.800px solid #cfcfcf;background:linear-gradient(#ddd,#333)"></div>
<svg style="left:43.64px;top:212.10px;" width="12.32" height="15" viewBox="0 0 14 15" preserveAspectRatio="none"><rect x="3" y="3" width="8" height="9.400" fill="#7d7d7d" stroke="#cfcfcf" stroke-width="0.800"/><path d="M4.400 5.400h5.200M4.400 7.200h5.200M4.400 9h5.200" stroke="#cfcfcf" stroke-width="0.800"/><path d="M8.400 12.400l2.600-2.600v2.600z" fill="#4a4a4a"/></svg>
<svg style="left:59.24px;top:212.10px;" width="12.32" height="15" viewBox="0 0 14 15" preserveAspectRatio="none"><path d="M3 12.800l.8-2.600 4.800-5.400 1.600 1.400-4.800 5.400z" fill="none" stroke="#cfcfcf" stroke-width="0.800"/><path d="M8.200 4.600l2.200-2.800 1.800 1.600-2.200 2.800z" fill="#cfcfcf"/></svg>
<div style="left:70.60px;top:224.60px;width:1.20px;height:1.20px;background:#cfcfcf;"></div>
<svg style="left:43.64px;top:228.30px;" width="12.32" height="15" viewBox="0 0 14 15" preserveAspectRatio="none"><path d="M4.200 8V4.200c0-.9 1.200-.9 1.200 0V3c0-.9 1.300-.9 1.300 0v.2c0-.9 1.300-.9 1.300 0v.9c0-.8 1.200-.8 1.200 0v5.300c0 2-.9 3.400-2.900 3.400-1.700 0-2.500-1-3.300-2.400l-1.200-2.200c-.4-.8.600-1.300 1.100-.7z" fill="#cfcfcf"/></svg>
<svg style="left:59.24px;top:228.30px;" width="12.32" height="15" viewBox="0 0 14 15" preserveAspectRatio="none"><circle cx="5.800" cy="6" r="3.400" fill="none" stroke="#cfcfcf" stroke-width="0.900"/><path d="M8.200 8.800l3.400 4.200" stroke="#cfcfcf" stroke-width="1.200"/></svg>
<svg style="left:43.40px;top:247.80px;" width="30.00" height="38" viewBox="0 0 30 38"><rect x="11" y="14.200" width="17.300" height="22.900" fill="#fff"/><rect x="15.300" y="21" width="7.800" height="9" fill="#4a4a4a"/><path d="M11.400 36.800L28 14.600" stroke="#e8121d" stroke-width="1.300"/><rect x="0.300" y="0.300" width="18.400" height="24.400" fill="#fff"/><path d="M0.500 24.300L18.500 0.700" stroke="#e8121d" stroke-width="1.400"/><path d="M24.600 2.600c2 .2 3 1.600 2.800 3.800" fill="none" stroke="#cfcfcf" stroke-width="0.900"/><path d="M23 2.600l2.200-1.600v3.200zM27.400 8l-1.600-2h3.200z" fill="#cfcfcf"/><rect x="2" y="29.200" width="3.600" height="4.400" fill="#fff" stroke="#111" stroke-width="0.600"/><rect x="3.800" y="31.600" width="3.600" height="4.400" fill="#111" stroke="#fff" stroke-width="0.500"/><path d="M2.200 33.400l3.200-4" stroke="#e8121d" stroke-width="0.600"/></svg>
<div style="left:46.90px;top:291.40px;width:9.00px;height:10.40px;background:#303030;border-radius:1.200px"></div>
<div style="left:49.40px;top:294.00px;width:4.20px;height:5.20px;background:#8e8e8e;box-sizing:border-box;border:0.500px solid #a5a5a5"></div>
<svg style="left:60.60px;top:292.40px;" width="6.40" height="8.6" viewBox="0 0 8 10" preserveAspectRatio="none"><path d="M0.800 1h6.400v2h-.7l-.2-1.100h-1.500v6l1 .2v.6h-3.600v-.6l1-.2v-6h-1.500l-.2 1.100h-.7z" fill="#bcbcbc"/></svg>
<div style="left:43.80px;top:309.20px;width:5.90px;height:7.40px;background:#0a0a0a;box-sizing:border-box;border:0.600px solid #888"></div>
<div style="left:54.000px;top:309.200px;width:6.500px;height:7.400px;background:linear-gradient(90deg,#eee,#555);box-sizing:border-box;border:0.600px solid #aaa"></div>
<div style="left:63.60px;top:307.30px;width:8.70px;height:11.70px;background:#303030;border-radius:1.200px"></div>
<svg style="left:65.00px;top:309.20px;" width="6.00" height="8" viewBox="0 0 6 8"><rect x="0" y="0" width="6" height="7.400" fill="#fff"/><path d="M0.300 7.100L5.700 0.300" stroke="#e8121d" stroke-width="1"/></svg>
<svg style="left:46.40px;top:327.60px;" width="9.00" height="9" viewBox="0 0 9 9"><rect x="2.800" y="3" width="5" height="4.600" fill="#cfcfcf"/><path d="M0.600 1.600h1M2.600 0.800h1M4.600 0.800h1M6.600 0.800h1M0.600 3.800h1.400M0.600 6h1.400M0.600 7.800h1" stroke="#cfcfcf" stroke-width="0.700"/></svg>
<div style="left:42.80px;top:343.90px;width:14.10px;height:15.30px;background:#303030;border-radius:1.500px"></div>
<svg style="left:46.60px;top:346.80px;" width="7.00" height="10" viewBox="0 0 7 10"><rect x="0.400" y="0.400" width="6" height="8.600" fill="#8d8d8d" stroke="#cfcfcf" stroke-width="0.700"/><rect x="1.600" y="2" width="2" height="2.600" fill="#222"/><path d="M4.400 2v3M1.400 6.400h4M1.400 7.600h4" stroke="#ddd" stroke-width="0.600"/></svg>
<svg style="left:62.40px;top:346.60px;" width="8.00" height="10" viewBox="0 0 8 10"><rect x="0.500" y="0.500" width="6" height="8.400" fill="#666" stroke="#a9a9a9" stroke-width="0.800"/><rect x="0.500" y="0.500" width="6" height="1.800" fill="#bdbdbd"/></svg>
<div style="left:70.60px;top:357.00px;width:1.20px;height:1.20px;background:#cfcfcf;"></div>
<div class="t" style="left:241.20px;top:35.82px;font-size:8.4px;line-height:9.66px;font-weight:400;color:#f2f2f2;transform:scaleX(0.8168);-webkit-text-stroke:0.2px #f2f2f2;">Adobe InDesign 2023</div>
<div class="t" style="left:533.00px;top:36.90px;font-size:8.6px;line-height:9.89px;font-weight:400;color:#fff;transform:scaleX(0.7802);-webkit-text-stroke:0.25px #fff;">Dela</div>
<div class="t" style="left:561.80px;top:36.94px;font-size:8.7px;line-height:10.00px;font-weight:700;color:#ebebeb;transform:scaleX(0.7694);">Grundläggande</div>
<div class="t" style="left:645.30px;top:37.67px;font-size:7.8px;line-height:8.97px;font-weight:400;color:#8a8a8a;transform:scaleX(0.7169);">Adobe Stock</div>
<div class="t" style="left:85.60px;top:59.43px;font-size:9.4px;line-height:10.81px;font-weight:400;color:#c4c4c4;transform:scaleX(0.6929);">×</div>
<div class="t" style="left:94.10px;top:60.73px;font-size:7.7px;line-height:8.85px;font-weight:400;color:#d2d2d2;transform:scaleX(0.7799);-webkit-text-stroke:0.15px #d2d2d2;">Manual Dummy.indd @ 75 % [GPU-förhandsvisning]</div>
<div class="t" style="left:248.60px;top:59.43px;font-size:9.4px;line-height:10.81px;font-weight:400;color:#ededed;transform:scaleX(0.6929);">×</div>
<div class="t" style="left:257.90px;top:60.73px;font-size:7.7px;line-height:8.85px;font-weight:700;color:#f6f6f6;transform:scaleX(0.7552);">RYTRYTDUM-20231011-A000.indd @ 37 % [GPU-förhandsvisning]</div>
<div class="t" style="left:42.20px;top:54.45px;font-size:6.5px;line-height:7.47px;font-weight:400;color:#a0a0a0;transform:scaleX(1.3241);">«</div>
<div class="t" style="left:120.50px;top:75.29px;font-size:7.6px;line-height:8.74px;font-weight:700;color:#f0f0f0;transform:scaleX(0.7813);">100</div>
<div class="t" style="left:168.90px;top:75.29px;font-size:7.6px;line-height:8.74px;font-weight:700;color:#f0f0f0;transform:scaleX(0.7808);">50</div>
<div class="t" style="left:217.30px;top:75.29px;font-size:7.6px;line-height:8.74px;font-weight:700;color:#f0f0f0;transform:scaleX(0.7793);">0</div>
<div class="t" style="left:265.70px;top:75.29px;font-size:7.6px;line-height:8.74px;font-weight:700;color:#f0f0f0;transform:scaleX(0.7808);">50</div>
<div class="t" style="left:314.10px;top:75.29px;font-size:7.6px;line-height:8.74px;font-weight:700;color:#f0f0f0;transform:scaleX(0.7813);">100</div>
<div class="t" style="left:362.50px;top:75.29px;font-size:7.6px;line-height:8.74px;font-weight:700;color:#f0f0f0;transform:scaleX(0.7813);">150</div>
<div class="t" style="left:410.90px;top:75.29px;font-size:7.6px;line-height:8.74px;font-weight:700;color:#f0f0f0;transform:scaleX(0.7813);">200</div>
<div class="t" style="left:459.30px;top:75.29px;font-size:7.6px;line-height:8.74px;font-weight:700;color:#f0f0f0;transform:scaleX(0.7813);">250</div>
<div class="t" style="left:490.00px;top:75.29px;font-size:7.6px;line-height:8.74px;font-weight:700;color:#f0f0f0;transform:scaleX(0.7793);">0</div>
<div class="t" style="left:89.60px;top:495.45px;font-size:15.1px;line-height:17.36px;font-weight:400;color:#0a0a0a;transform:scaleX(0.6662);will-change:auto;">2</div>
<div class="t" style="left:187.40px;top:495.45px;font-size:15.1px;line-height:17.36px;font-weight:400;color:#0a0a0a;transform:scaleX(0.6424);will-change:auto;">2</div>
<div class="t" style="left:240.20px;top:495.45px;font-size:15.1px;line-height:17.36px;font-weight:400;color:#0a0a0a;transform:scaleX(0.6424);will-change:auto;">3</div>
<div class="t" style="left:459.20px;top:495.45px;font-size:15.1px;line-height:17.36px;font-weight:400;color:#0a0a0a;transform:scaleX(0.6186);will-change:auto;">3</div>
<div class="t" style="left:337.40px;top:495.55px;font-size:15.1px;line-height:17.36px;font-weight:400;color:#0a0a0a;transform:scaleX(0.7007);will-change:auto;">Side 3</div>
<div class="t" style="left:545.60px;top:54.55px;font-size:6.5px;line-height:7.47px;font-weight:400;color:#a0a0a0;transform:scaleX(1.2690);">«</div>
<div class="t" style="left:566.70px;top:54.55px;font-size:6.5px;line-height:7.47px;font-weight:400;color:#a0a0a0;transform:scaleX(1.2690);">«</div>
<div class="t" style="left:699.80px;top:54.55px;font-size:6.5px;line-height:7.47px;font-weight:400;color:#a0a0a0;transform:scaleX(1.2690);">»</div>
<div class="t" style="left:581.80px;top:69.43px;font-size:7.7px;line-height:8.85px;font-weight:400;color:#c2c2c2;transform:scaleX(0.8043);">Egenskaper</div>
<div class="t" style="left:625.00px;top:69.43px;font-size:7.7px;line-height:8.85px;font-weight:700;color:#fff;transform:scaleX(0.7580);">Sidor</div>
<div class="t" style="left:652.50px;top:69.43px;font-size:7.7px;line-height:8.85px;font-weight:400;color:#c2c2c2;transform:scaleX(0.8241);">CC Librarie:</div>
<div class="t" style="left:577.10px;top:87.11px;font-size:7.4px;line-height:8.51px;font-weight:400;color:#f2f2f2;transform:scaleX(0.7519);-webkit-text-stroke:0.2px #f2f2f2;">[Ingen]</div>
<div class="t" style="left:577.10px;top:106.91px;font-size:7.4px;line-height:8.51px;font-weight:400;color:#f2f2f2;transform:scaleX(0.7804);-webkit-text-stroke:0.2px #f2f2f2;">A-Master</div>
<div class="t" style="left:593.40px;top:274.90px;font-size:8.6px;line-height:9.89px;font-weight:700;color:#fff;transform:scaleX(0.7111);">1</div>
<div class="t" style="left:639.10px;top:275.55px;font-size:7.0px;line-height:8.05px;font-weight:700;color:#f2f2f2;transform:scaleX(0.8043);">2–3</div>
<div class="t" style="left:601.70px;top:333.25px;font-size:7.0px;line-height:8.05px;font-weight:700;color:#f2f2f2;transform:scaleX(0.8043);">4–5</div>
<div class="t" style="left:660.10px;top:333.25px;font-size:7.0px;line-height:8.05px;font-weight:700;color:#f2f2f2;transform:scaleX(0.8043);">6–7</div>
<div class="t" style="left:601.70px;top:390.35px;font-size:7.0px;line-height:8.05px;font-weight:700;color:#f2f2f2;transform:scaleX(0.8043);">8–9</div>
<div class="t" style="left:657.00px;top:390.35px;font-size:7.0px;line-height:8.05px;font-weight:700;color:#f2f2f2;transform:scaleX(0.8170);">10–11</div>
<div class="t" style="left:598.60px;top:447.15px;font-size:7.0px;line-height:8.05px;font-weight:700;color:#f2f2f2;transform:scaleX(0.8013);">12–13</div>
<div class="t" style="left:657.00px;top:447.15px;font-size:7.0px;line-height:8.05px;font-weight:700;color:#f2f2f2;transform:scaleX(0.8013);">14–15</div>
<div class="t" style="left:598.60px;top:504.35px;font-size:7.0px;line-height:8.05px;font-weight:700;color:#f2f2f2;transform:scaleX(0.8013);">16–17</div>
<div class="t" style="left:657.00px;top:504.35px;font-size:7.0px;line-height:8.05px;font-weight:700;color:#f2f2f2;transform:scaleX(0.8013);">18–19</div>
<div class="t" style="left:592.40px;top:561.95px;font-size:7.0px;line-height:8.05px;font-weight:700;color:#f2f2f2;transform:scaleX(0.7952);">20</div>
<div class="t b" style="left:722.80px;top:26.67px;transform:scaleX(1.0664)">När du har klickat på</div>
<div class="t b" style="left:722.80px;top:50.77px;transform:scaleX(1.0706)">”Skapa dummy” så</div>
<div class="t b" style="left:722.80px;top:74.87px;transform:scaleX(1.0640)">kan det ta en liten</div>
<div class="t b" style="left:722.80px;top:98.97px;transform:scaleX(1.0814)">stund, beroende på</div>
<div class="t b" style="left:722.80px;top:123.07px;transform:scaleX(1.0759)">hur många sidor du har</div>
<div class="t b" style="left:722.80px;top:147.17px;transform:scaleX(1.0708)">och annonser som an-</div>
<div class="t b" style="left:722.80px;top:171.27px;transform:scaleX(1.0591)">nonser som placeras.</div>
<div class="t b" style="left:722.80px;top:219.47px;transform:scaleX(1.0707)">Men sedan öppnas In-</div>
<div class="t b" style="left:722.80px;top:243.57px;transform:scaleX(1.0884)">Design dokument med</div>
<div class="t b" style="left:722.80px;top:267.67px;transform:scaleX(1.0730)">din Dummy där du kan</div>
<div class="t b" style="left:722.80px;top:291.77px;transform:scaleX(1.0958)">se och fortsätta att</div>
<div class="t b" style="left:722.80px;top:315.87px;transform:scaleX(1.0743)">arbeta med att placera</div>
<div class="t b" style="left:722.80px;top:339.97px;transform:scaleX(1.0799)">annonser som ej blivit</div>
<div class="t b" style="left:722.80px;top:364.07px;transform:scaleX(1.0511)">placerade än.</div>
</body></html>
